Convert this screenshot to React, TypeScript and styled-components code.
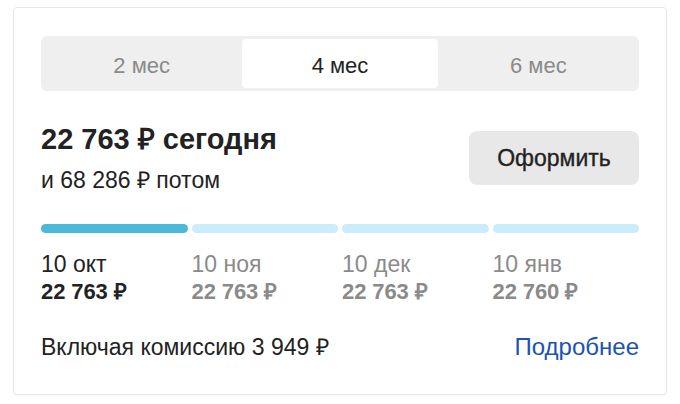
import React, { useState } from "react";
import styled, { createGlobalStyle } from "styled-components";

const Global = createGlobalStyle`
  html, body { margin: 0; padding: 0; background: #ffffff; }
  body { font-family: "Liberation Sans", Arial, sans-serif; color: #222222; }
`;

const Card = styled.div`
  box-sizing: border-box;
  margin: 7px 13px;
  width: 654px;
  height: 388px;
  border: 1px solid #e6e6e6;
  border-radius: 4px;
  box-shadow: 0 1px 2px rgba(0, 0, 0, 0.04);
  padding: 28px 27px 0 27px;
  display: flex;
  flex-direction: column;
`;

const Tabs = styled.div`
  display: flex;
  gap: 3px;
  height: 55px;
  box-sizing: border-box;
  padding: 3px;
  background: #efefef;
  border-radius: 6px;
`;

const Tab = styled.button<{ $active?: boolean }>`
  flex: 1;
  border: none;
  border-radius: 4px;
  background: ${(p) => (p.$active ? "#ffffff" : "transparent")};
  color: ${(p) => (p.$active ? "#222222" : "#8a8a8a")};
  font-family: inherit;
  font-size: 22px;
  cursor: pointer;
  padding: 4px 0 0 0;
`;

const Summary = styled.div`
  display: flex;
  justify-content: space-between;
  align-items: flex-start;
  margin-top: 30px;
`;

const Amounts = styled.div`
  display: flex;
  flex-direction: column;
`;

const Today = styled.div`
  font-size: 29px;
  line-height: 36px;
  font-weight: 700;
  color: #222222;
`;

const Later = styled.div`
  margin-top: 9px;
  font-size: 23px;
  line-height: 28px;
  color: #222222;
`;

const Submit = styled.button`
  margin-top: 10px;
  width: 170px;
  height: 54px;
  border: none;
  border-radius: 8px;
  background: #e8e8e8;
  color: #222222;
  font-family: inherit;
  font-size: 23px;
  -webkit-text-stroke: 0.35px #222222;
  cursor: pointer;
`;

const Schedule = styled.div`
  display: grid;
  grid-template-columns: repeat(4, 1fr);
  column-gap: 4px;
  margin-top: 30px;
`;

const Payment = styled.div`
  display: flex;
  flex-direction: column;
`;

const Bar = styled.div<{ $done?: boolean }>`
  height: 9px;
  border-radius: 5px;
  background: ${(p) => (p.$done ? "#4bb9d8" : "#caecfb")};
  margin-bottom: 17px;
`;

const PayDate = styled.div<{ $current?: boolean }>`
  font-size: 23px;
  line-height: 28px;
  color: ${(p) => (p.$current ? "#222222" : "#8a8a8a")};
`;

const PaySum = styled.div<{ $current?: boolean }>`
  font-size: 22px;
  line-height: 28px;
  font-weight: 700;
  letter-spacing: -0.1px;
  color: ${(p) => (p.$current ? "#222222" : "#8a8a8a")};
`;

const Footer = styled.div`
  display: flex;
  justify-content: space-between;
  align-items: baseline;
  margin-top: 27px;
  font-size: 23px;
  line-height: 28px;
`;

const Fee = styled.span`
  color: #222222;
`;

const More = styled.a`
  color: #1c52b3;
  font-size: 24px;
  text-decoration: none;
  cursor: pointer;
`;

const periods = ["2 мес", "4 мес", "6 мес"];

const payments = [
  { date: "10 окт", sum: "22 763 ₽" },
  { date: "10 ноя", sum: "22 763 ₽" },
  { date: "10 дек", sum: "22 763 ₽" },
  { date: "10 янв", sum: "22 760 ₽" },
];

export default function App() {
  const [period, setPeriod] = useState(1);
  return (
    <>
      <Global />
      <Card>
        <Tabs>
          {periods.map((p, i) => (
            <Tab key={p} $active={i === period} onClick={() => setPeriod(i)}>
              {p}
            </Tab>
          ))}
        </Tabs>
        <Summary>
          <Amounts>
            <Today>22 763 ₽ сегодня</Today>
            <Later>и 68 286 ₽ потом</Later>
          </Amounts>
          <Submit>Оформить</Submit>
        </Summary>
        <Schedule>
          {payments.map((p, i) => (
            <Payment key={p.date}>
              <Bar $done={i === 0} />
              <PayDate $current={i === 0}>{p.date}</PayDate>
              <PaySum $current={i === 0}>{p.sum}</PaySum>
            </Payment>
          ))}
        </Schedule>
        <Footer>
          <Fee>Включая комиссию 3 949 ₽</Fee>
          <More>Подробнее</More>
        </Footer>
      </Card>
    </>
  );
}
